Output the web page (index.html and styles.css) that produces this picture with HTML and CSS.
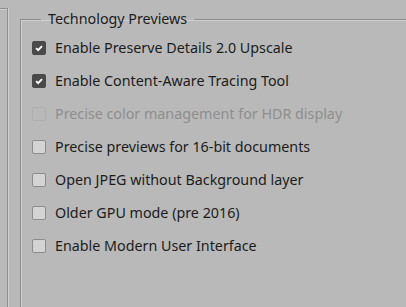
FILE: index.html
```html
<!DOCTYPE html>
<html lang="en">
<head>
    <meta charset="UTF-8">
    <meta name="viewport" content="width=device-width, initial-scale=1.0">
    <title>Technology Previews</title>
    <link rel="stylesheet" href="styles.css">
</head>
<body>
    <div class="prefs">
        <div class="side"></div>
        <fieldset class="group">
            <legend>Technology Previews</legend>
            <label class="opt">
                <span class="box checked"><svg viewBox="0 0 14 14"><path d="M3.6 7.1 L6 9.5 L10.5 4.8"/></svg></span>
                <span class="label">Enable Preserve Details 2.0 Upscale</span>
            </label>
            <label class="opt">
                <span class="box checked"><svg viewBox="0 0 14 14"><path d="M3.6 7.1 L6 9.5 L10.5 4.8"/></svg></span>
                <span class="label">Enable Content-Aware Tracing Tool</span>
            </label>
            <label class="opt disabled">
                <span class="box"></span>
                <span class="label">Precise color management for HDR display</span>
            </label>
            <label class="opt">
                <span class="box"></span>
                <span class="label">Precise previews for 16-bit documents</span>
            </label>
            <label class="opt">
                <span class="box"></span>
                <span class="label">Open JPEG without Background layer</span>
            </label>
            <label class="opt">
                <span class="box"></span>
                <span class="label">Older GPU mode (pre 2016)</span>
            </label>
            <label class="opt">
                <span class="box"></span>
                <span class="label">Enable Modern User Interface</span>
            </label>
        </fieldset>
    </div>
</body>
</html>
```

FILE: styles.css
```css
html, body {
    height: 100%;
}
body {
    margin: 0;
    background-color: #b9b9b9;
    font-family: "Noto Sans", "DejaVu Sans", sans-serif;
    font-size: 14.3px;
    color: #1c1c1c;
    overflow: hidden;
}
.prefs {
    display: flex;
    height: 100%;
}
.side {
    width: 7px;
    margin-top: 8px;
    border-top: 1px solid #8f8f8f;
    border-right: 1px solid #8f8f8f;
    box-shadow: 1px 0 0 #cfcfcf, 0 1px 0 #cfcfcf inset;
}
.group {
    flex: 1;
    margin: 11px 0 0 12px;
    padding: 4px 0 0 11px;
    border: none;
    border-top: 1px solid #8f8f8f;
    border-left: 1px solid #8f8f8f;
    box-shadow: 1px 1px 0 #cfcfcf inset;
    min-width: 0;
}
.group legend {
    margin-left: 9px;
    padding: 0 7px;
    line-height: 16px;
    color: #1c1c1c;
}
.opt {
    display: flex;
    align-items: center;
    height: 33px;
    white-space: nowrap;
}
.box {
    width: 14px;
    height: 14px;
    box-sizing: border-box;
    border: 1px solid #8c8c8c;
    border-radius: 2px;
    background-color: #d4d4d4;
    flex: none;
    margin-right: 9px;
}
.box.checked {
    background-color: #4a4a4a;
    border-color: #4a4a4a;
}
.box svg {
    display: block;
    width: 12px;
    height: 12px;
}
.box svg path {
    fill: none;
    stroke: #ffffff;
    stroke-width: 2.2;
}
.opt.disabled .box {
    border-color: #aeaeae;
    background-color: #b9b9b9;
}
.opt.disabled .label {
    color: #8e8e8e;
}
```
